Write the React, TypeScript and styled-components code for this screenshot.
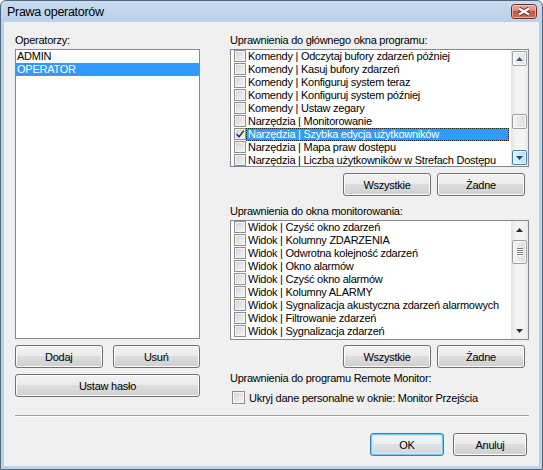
import React from "react";
import styled, { createGlobalStyle, css } from "styled-components";

const GlobalStyle = createGlobalStyle`
  html, body {
    margin: 0;
    padding: 0;
    background: #ffffff;
  }
  body {
    font-family: "Liberation Sans", Arial, sans-serif;
    font-size: 11px;
    letter-spacing: -0.25px;
    color: #000;
  }
`;

const Window = styled.div`
  width: 543px;
  height: 470px;
  box-sizing: border-box;
  border: 1px solid #52677f;
  border-radius: 6px 6px 0 0;
  background: linear-gradient(to bottom, #c9dbef 0px, #b9d1ea 21px, #b9d1ea 100%);
  padding: 0 3px 3px;
  display: flex;
  flex-direction: column;
  overflow: hidden;
`;

const TitleBar = styled.div`
  height: 21px;
  flex: none;
  display: flex;
  align-items: center;
  justify-content: space-between;
  padding: 0 2px 0 3px;
`;

const Title = styled.span`
  font-size: 12.5px;
  letter-spacing: -0.3px;
  color: #000;
`;

const Client = styled.div`
  flex: 1;
  background: #f0f0f0;
  padding: 12px 10px 0 11px;
  display: flex;
  flex-direction: column;
`;

const Columns = styled.div`
  display: flex;
  gap: 30px;
`;

const Column = styled.div<{ $w: number }>`
  width: ${(p) => p.$w}px;
  display: flex;
  flex-direction: column;
`;

const Label = styled.div<{ $top?: number }>`
  height: 13px;
  line-height: 13px;
  margin-top: ${(p) => p.$top ?? 0}px;
  margin-bottom: 2px;
  white-space: nowrap;
`;

const ListBox = styled.div<{ $h: number }>`
  height: ${(p) => p.$h}px;
  box-sizing: border-box;
  border: 1px solid #828790;
  background: #fff;
  display: flex;
  overflow: hidden;
`;

const Items = styled.div`
  flex: 1;
  min-width: 0;
  display: flex;
  flex-direction: column;
`;

const UserItem = styled.div<{ $selected?: boolean }>`
  height: 13px;
  line-height: 13px;
  padding-left: 1px;
  white-space: nowrap;
  ${(p) =>
    p.$selected &&
    css`
      background: #3399ff;
      color: #fff;
    `}
`;

const CheckRow = styled.div`
  height: 13px;
  flex: none;
  display: flex;
  padding-left: 3px;
`;

const Box = styled.span<{ $size: number }>`
  width: ${(p) => p.$size}px;
  height: ${(p) => p.$size}px;
  flex: none;
  box-sizing: border-box;
  border: 1px solid #8e8f8f;
  background: linear-gradient(135deg, #cbced3 0%, #e2e4e7 45%, #f5f5f5 100%);
  box-shadow: inset 0 0 0 1px #f6f6f6;
  display: flex;
  align-items: center;
  justify-content: center;
`;

const ItemText = styled.span<{ $selected?: boolean }>`
  flex: 1;
  margin-right: 2px;
  height: 13px;
  box-sizing: border-box;
  line-height: 11px;
  padding: 0 1px;
  border: 1px dotted transparent;
  white-space: nowrap;
  overflow: hidden;
  ${(p) =>
    p.$selected &&
    css`
      background: #3399ff;
      color: #fff;
      border-color: #1a1a1a;
    `}
`;

const Scroll = styled.div`
  width: 17px;
  flex: none;
  box-sizing: border-box;
  padding: 1px;
  display: flex;
  flex-direction: column;
  background: linear-gradient(to right, #e3e3e3 0%, #f2f2f2 25%, #f4f4f4 75%, #e7e7e7 100%);
`;

const ScrollButton = styled.div<{ $state: "plain" | "framed" | "hot" }>`
  height: 15px;
  flex: none;
  box-sizing: border-box;
  border-radius: 2px;
  display: flex;
  align-items: center;
  justify-content: center;
  ${(p) =>
    p.$state === "framed" &&
    css`
      border: 1px solid #a3a3a3;
      background: linear-gradient(to right, #f6f6f6, #e2e2e2);
      box-shadow: inset 0 0 0 1px #fbfbfb;
    `}
  ${(p) =>
    p.$state === "hot" &&
    css`
      border: 1px solid #3c7fb1;
      background: linear-gradient(to right, #e8f6fd, #b2dff6);
      box-shadow: inset 0 0 0 1px #f2fbff;
    `}
`;

const Track = styled.div`
  flex: 1;
  display: flex;
  flex-direction: column;
`;

const Thumb = styled.div<{ $top: number; $h: number }>`
  margin-top: ${(p) => p.$top}px;
  height: ${(p) => p.$h}px;
  box-sizing: border-box;
  border: 1px solid #9d9d9d;
  border-radius: 2px;
  background: linear-gradient(to right, #f5f5f5, #dcdcdc);
  box-shadow: inset 0 0 0 1px #fcfcfc;
  display: flex;
  align-items: center;
  justify-content: center;
`;

const Grip = styled.div`
  width: 6px;
  height: 8px;
  background: repeating-linear-gradient(to bottom, #7c7c7c 0 1px, #fdfdfd 1px 2px);
`;

const ButtonRow = styled.div<{ $top: number; $end?: boolean }>`
  display: flex;
  gap: ${(p) => (p.$end ? 6 : 10)}px;
  margin-top: ${(p) => p.$top}px;
  justify-content: ${(p) => (p.$end ? "flex-end" : "stretch")};
  padding-right: ${(p) => (p.$end ? 4 : 0)}px;
`;

const Button = styled.button<{ $w?: number; $primary?: boolean }>`
  height: 23px;
  box-sizing: border-box;
  width: ${(p) => (p.$w ? `${p.$w}px` : "auto")};
  flex: ${(p) => (p.$w ? "none" : "1")};
  padding: 0;
  font: inherit;
  letter-spacing: inherit;
  color: #000;
  border: 1px solid ${(p) => (p.$primary ? "#3c7fb1" : "#707070")};
  border-radius: 3px;
  background: ${(p) =>
    p.$primary
      ? "linear-gradient(to bottom, #f4f6f8 0%, #eceef0 49%, #dfe2e5 50%, #d3d7db 100%)"
      : "linear-gradient(to bottom, #f2f2f2 0%, #ebebeb 49%, #dddddd 50%, #cfcfcf 100%)"};
  box-shadow: ${(p) =>
    p.$primary ? "inset 0 0 0 1px #6fcdf4, inset 0 0 0 2px #c4ebfb" : "inset 0 0 0 1px #fcfcfc"};
`;

const Option = styled.label`
  display: flex;
  align-items: center;
  gap: 4px;
  margin-top: 4px;
  padding-left: 2px;
  height: 13px;
  white-space: nowrap;
`;

const Separator = styled.div`
  margin-top: 11px;
  border-top: 1px solid #a0a0a0;
  border-bottom: 1px solid #ffffff;
`;

const Footer = styled.div`
  display: flex;
  justify-content: flex-end;
  gap: 9px;
  margin-top: 16px;
  padding-right: 2px;
`;

const mainRights = [
  "Komendy | Odczytaj bufory zdarzeń później",
  "Komendy | Kasuj bufory zdarzeń",
  "Komendy | Konfiguruj system teraz",
  "Komendy | Konfiguruj system później",
  "Komendy | Ustaw zegary",
  "Narzędzia | Monitorowanie",
  "Narzędzia | Szybka edycja użytkowników",
  "Narzędzia | Mapa praw dostępu",
  "Narzędzia | Liczba użytkowników w Strefach Dostępu",
];

const monitorRights = [
  "Widok | Czyść okno zdarzeń",
  "Widok | Kolumny ZDARZENIA",
  "Widok | Odwrotna kolejność zdarzeń",
  "Widok | Okno alarmów",
  "Widok | Czyść okno alarmów",
  "Widok | Kolumny ALARMY",
  "Widok | Sygnalizacja akustyczna zdarzeń alarmowych",
  "Widok | Filtrowanie zdarzeń",
  "Widok | Sygnalizacja zdarzeń",
];

const CloseIcon = () => (
  <svg width="26" height="15" viewBox="0 0 26 15">
    <defs>
      <linearGradient id="closeGrad" x1="0" y1="0" x2="0" y2="1">
        <stop offset="0" stopColor="#e9b3a9" />
        <stop offset="0.45" stopColor="#d6897b" />
        <stop offset="0.5" stopColor="#c45744" />
        <stop offset="1" stopColor="#cf6e58" />
      </linearGradient>
    </defs>
    <rect x="0.5" y="0.5" width="25" height="14" rx="3" fill="url(#closeGrad)" stroke="#74291f" />
    <rect x="1.5" y="1.5" width="23" height="12" rx="2" fill="none" stroke="#f3cbc2" strokeOpacity="0.7" />
    <path d="M8 4.5 L18 10.5 M18 4.5 L8 10.5" stroke="#5e2a22" strokeWidth="3.8" />
    <path d="M8 4.5 L18 10.5 M18 4.5 L8 10.5" stroke="#ffffff" strokeWidth="2.2" />
  </svg>
);

const Arrow = ({ up, color }: { up?: boolean; color: string }) => (
  <svg width="7" height="4" viewBox="0 0 7 4">
    <polygon points={up ? "0,4 7,4 3.5,0" : "0,0 7,0 3.5,4"} fill={color} />
  </svg>
);

const Tick = () => (
  <svg width="10" height="10" viewBox="0 0 10 10">
    <path d="M1.5 5 L4 7.8 L8.8 1.8" fill="none" stroke="#27397a" strokeWidth="1.6" />
  </svg>
);

const CheckBox = ({ checked, size }: { checked?: boolean; size: number }) => (
  <Box $size={size}>{checked && <Tick />}</Box>
);

const App = () => {
  return (
    <>
      <GlobalStyle />
      <Window>
        <TitleBar>
          <Title>Prawa operatorów</Title>
          <CloseIcon />
        </TitleBar>
        <Client>
          <Columns>
            <Column $w={185}>
              <Label>Operatorzy:</Label>
              <ListBox $h={290}>
                <Items>
                  <UserItem>ADMIN</UserItem>
                  <UserItem $selected>OPERATOR</UserItem>
                </Items>
              </ListBox>
              <ButtonRow $top={6}>
                <Button>Dodaj</Button>
                <Button>Usuń</Button>
              </ButtonRow>
              <ButtonRow $top={6}>
                <Button>Ustaw hasło</Button>
              </ButtonRow>
            </Column>

            <Column $w={299}>
              <Label>Uprawnienia do głównego okna programu:</Label>
              <ListBox $h={118}>
                <Items>
                  {mainRights.map((r, i) => (
                    <CheckRow key={r}>
                      <CheckBox size={12} checked={i === 6} />
                      <ItemText $selected={i === 6}>{r}</ItemText>
                    </CheckRow>
                  ))}
                </Items>
                <Scroll>
                  <ScrollButton $state="framed">
                    <Arrow up color="#4a5a70" />
                  </ScrollButton>
                  <Track>
                    <Thumb $top={48} $h={15} />
                  </Track>
                  <ScrollButton $state="hot">
                    <Arrow color="#1f4e79" />
                  </ScrollButton>
                </Scroll>
              </ListBox>
              <ButtonRow $top={6} $end>
                <Button $w={88}>Wszystkie</Button>
                <Button $w={88}>Żadne</Button>
              </ButtonRow>

              <Label $top={9}>Uprawnienia do okna monitorowania:</Label>
              <ListBox $h={120}>
                <Items>
                  {monitorRights.map((r) => (
                    <CheckRow key={r}>
                      <CheckBox size={12} />
                      <ItemText>{r}</ItemText>
                    </CheckRow>
                  ))}
                </Items>
                <Scroll>
                  <ScrollButton $state="plain">
                    <Arrow up color="#303030" />
                  </ScrollButton>
                  <Track>
                    <Thumb $top={3} $h={24}>
                      <Grip />
                    </Thumb>
                  </Track>
                  <ScrollButton $state="plain">
                    <Arrow color="#303030" />
                  </ScrollButton>
                </Scroll>
              </ListBox>
              <ButtonRow $top={5} $end>
                <Button $w={88}>Wszystkie</Button>
                <Button $w={88}>Żadne</Button>
              </ButtonRow>

              <Label $top={4}>Uprawnienia do programu Remote Monitor:</Label>
              <Option>
                <CheckBox size={13} />
                Ukryj dane personalne w oknie: Monitor Przejścia
              </Option>
            </Column>
          </Columns>

          <Separator />
          <Footer>
            <Button $w={74} $primary>
              OK
            </Button>
            <Button $w={74}>Anuluj</Button>
          </Footer>
        </Client>
      </Window>
    </>
  );
};

export default App;
